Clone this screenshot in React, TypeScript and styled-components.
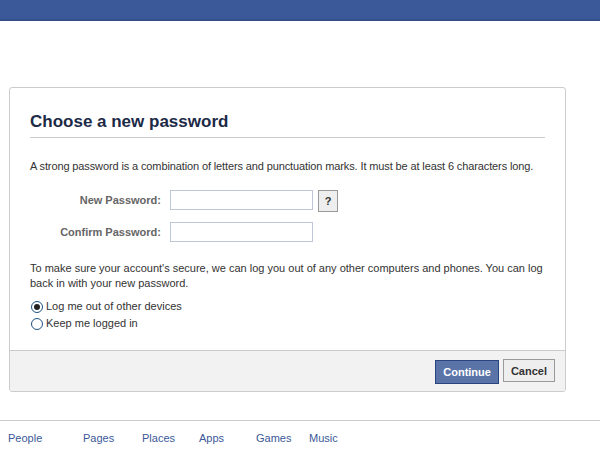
import styled, { createGlobalStyle } from 'styled-components';

const GlobalStyle = createGlobalStyle`
  body {
    margin: 0;
    background: #fff;
    font-family: Tahoma, "Liberation Sans", Arial, sans-serif;
    font-size: 11px;
    color: #333;
  }
`;

const TopBar = styled.div`
  height: 19px;
  background: #3b5998;
  border-bottom: 2px solid #344f88;
`;

const Main = styled.div`
  padding: 66px 0 0 9px;
  width: 557px;
`;

const Card = styled.div`
  border: 1px solid #ccc;
  border-radius: 3px;
  background: #fff;
  overflow: hidden;
`;

const Body = styled.div`
  padding: 24px 20px 19px 20px;
`;

const Title = styled.h2`
  margin: 0;
  padding: 0 0 5px 0;
  border-bottom: 1px solid #ccc;
  font-size: 17px;
  line-height: 20px;
  font-weight: bold;
  color: #1c2a47;
`;

const Text = styled.p<{ $top: number; $tight?: boolean }>`
  margin: ${(p) => p.$top}px 0 0 0;
  line-height: 15px;
  color: #333;
  letter-spacing: ${(p) => (p.$tight ? '-0.12px' : 'normal')};
  white-space: ${(p) => (p.$tight ? 'nowrap' : 'normal')};
`;

const Form = styled.div`
  display: grid;
  grid-template-columns: 131px auto;
  column-gap: 9px;
  row-gap: 10px;
  margin-top: 16px;
`;

const Label = styled.label`
  text-align: right;
  font-weight: bold;
  color: #666;
  line-height: 20px;
`;

const Field = styled.div`
  display: flex;
  gap: 5px;
  align-items: flex-start;
`;

const Input = styled.input`
  box-sizing: border-box;
  width: 143px;
  height: 20px;
  border: 1px solid #bdc7d8;
  margin: 0;
`;

const HelpButton = styled.button`
  box-sizing: border-box;
  width: 20px;
  height: 22px;
  padding: 0;
  border: 1px solid #999;
  background: #eee;
  font-family: inherit;
  font-size: 11px;
  font-weight: bold;
  color: #333;
`;

const Radios = styled.div`
  margin-top: 8px;
  display: flex;
  flex-direction: column;
  gap: 2px;
`;

const RadioRow = styled.label`
  display: flex;
  align-items: center;
  gap: 3px;
  line-height: 15px;
`;

const Radio = styled.span<{ $on: boolean }>`
  box-sizing: border-box;
  width: 12px;
  height: 12px;
  border-radius: 50%;
  border: 1px solid #1c5180;
  background: #fff;
  margin-left: 1px;
  display: flex;
  align-items: center;
  justify-content: center;
  &::after {
    content: '';
    display: ${(p) => (p.$on ? 'block' : 'none')};
    width: 6px;
    height: 6px;
    border-radius: 50%;
    background: #222;
  }
`;

const Footer = styled.div`
  display: flex;
  justify-content: flex-end;
  gap: 4px;
  padding: 8px 10px 7px 0;
  background: #f2f2f2;
  border-top: 1px solid #ccc;
`;

const Button = styled.button<{ $primary?: boolean }>`
  box-sizing: border-box;
  height: ${(p) => (p.$primary ? 24 : 23)}px;
  padding: 0 7px;
  margin-top: ${(p) => (p.$primary ? 1 : 0)}px;
  font-family: inherit;
  font-size: 11px;
  font-weight: bold;
  color: ${(p) => (p.$primary ? '#fff' : '#333')};
  background: ${(p) => (p.$primary ? '#5b74a8' : '#eee')};
  border: 1px solid ${(p) => (p.$primary ? '#29447e' : '#999')};
`;

const Links = styled.div`
  margin-top: 28px;
  border-top: 1px solid #ccc;
  padding: 11px 0 0 8px;
  display: flex;
`;

const Link = styled.a<{ $w: number }>`
  width: ${(p) => p.$w}px;
  color: #3b5998;
  text-decoration: none;
`;

const links: [string, number][] = [
  ['People', 75],
  ['Pages', 59],
  ['Places', 57],
  ['Apps', 57],
  ['Games', 53],
  ['Music', 60],
];

export default function App() {
  return (
    <>
      <GlobalStyle />
      <TopBar />
      <Main>
        <Card>
          <Body>
            <Title>Choose a new password</Title>
            <Text $top={21} $tight>
              A strong password is a combination of letters and punctuation marks. It must be at least 6 characters long.
            </Text>
            <Form>
              <Label>New Password:</Label>
              <Field>
                <Input type="password" />
                <HelpButton>?</HelpButton>
              </Field>
              <Label>Confirm Password:</Label>
              <Field>
                <Input type="password" />
              </Field>
            </Form>
            <Text $top={19}>
              To make sure your account's secure, we can log you out of any other computers and phones. You can log back in with your new password.
            </Text>
            <Radios>
              <RadioRow>
                <Radio $on={true} />
                Log me out of other devices
              </RadioRow>
              <RadioRow>
                <Radio $on={false} />
                Keep me logged in
              </RadioRow>
            </Radios>
          </Body>
          <Footer>
            <Button $primary>Continue</Button>
            <Button>Cancel</Button>
          </Footer>
        </Card>
      </Main>
      <Links>
        {links.map(([t, w]) => (
          <Link key={t} $w={w}>
            {t}
          </Link>
        ))}
      </Links>
    </>
  );
}
